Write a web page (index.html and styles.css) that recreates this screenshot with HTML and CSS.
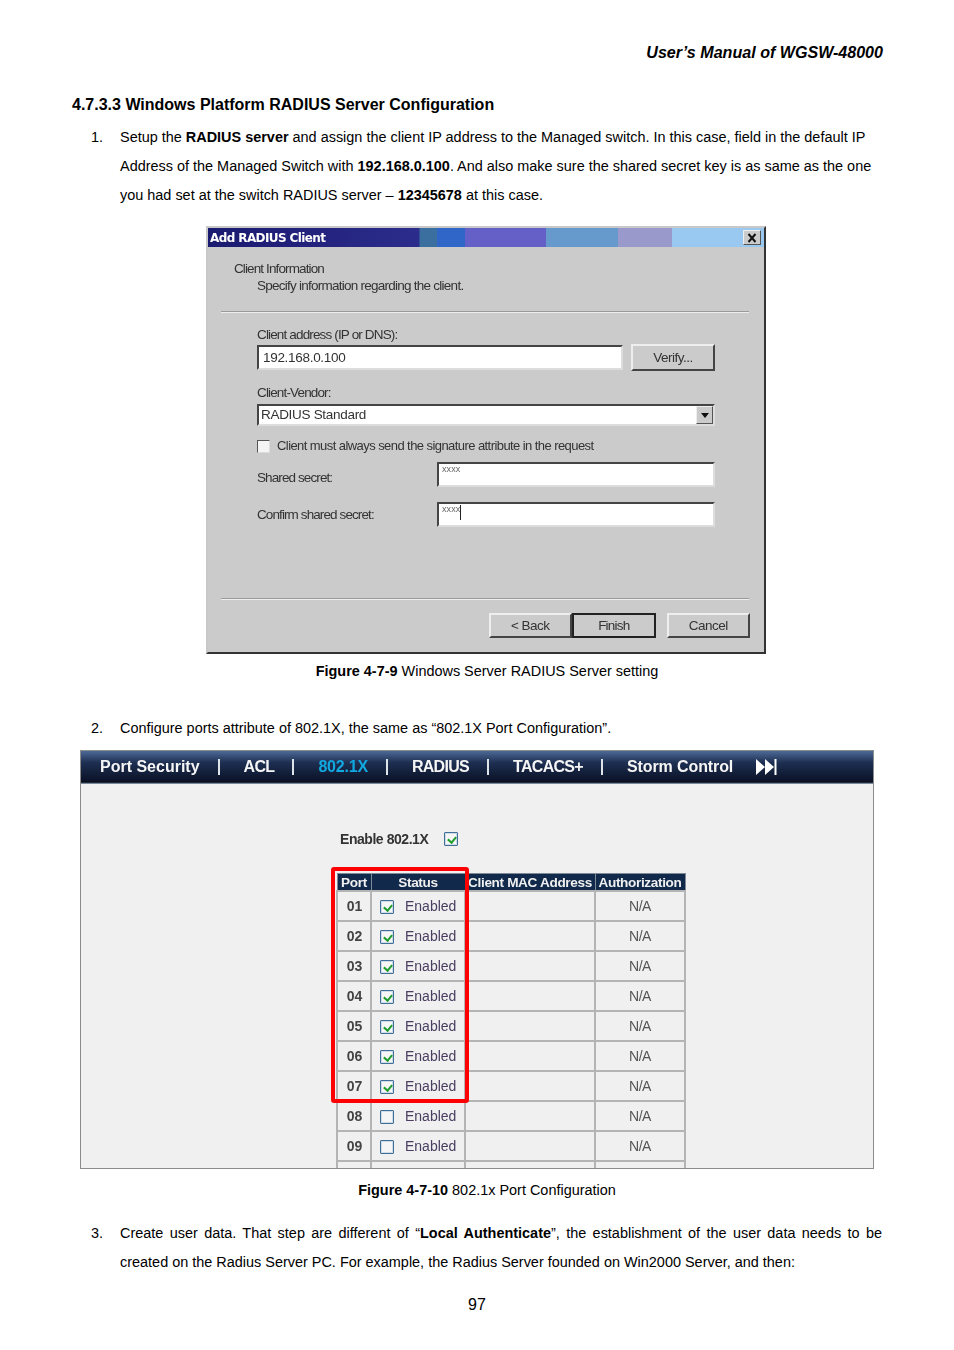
FILE: index.html
```html
<!DOCTYPE html>
<html lang="en">
<head>
<meta charset="utf-8">
<title>User's Manual of WGSW-48000</title>
<link rel="stylesheet" href="styles.css">
</head>
<body>
<main class="page">
  <p class="running-head">User’s Manual of WGSW-48000</p>
  <h2 class="section-title">4.7.3.3 Windows Platform RADIUS Server Configuration</h2>

  <div class="item">
    <span class="num">1.</span>
    <p>Setup the <b>RADIUS server</b> and assign the client IP address to the Managed switch. In this case, field in the default IP Address of the Managed Switch with <b>192.168.0.100</b>. And also make sure the shared secret key is as same as the one you had set at the switch RADIUS server – <b>12345678</b> at this case.</p>
  </div>

  <section class="dialog">
    <div class="titlebar">
      <span class="title">Add RADIUS Client</span>
      <span class="close"><svg width="14" height="12" viewBox="0 0 14 12"><path d="M3.5 2 10.5 10M10.5 2 3.5 10" stroke="#111" stroke-width="2" fill="none"/></svg></span>
    </div>
    <div class="dlg-head">
      <div class="dlg-h1">Client Information</div>
      <div class="dlg-h2">Specify information regarding the client.</div>
    </div>
    <hr class="etched">
    <div class="dlg-body">
      <label class="lbl">Client address (IP or DNS):</label>
      <div class="addr-row">
        <div class="field addr">192.168.0.100</div>
        <div class="btn verify">Verify...</div>
      </div>
      <label class="lbl vendor-lbl">Client-Vendor:</label>
      <div class="field combo">RADIUS Standard<span class="arrow"><svg width="8" height="5" viewBox="0 0 8 5"><path d="M0 0h8L4 5z" fill="#111"/></svg></span></div>
      <div class="check-row"><span class="win-check"></span><span>Client must always send the signature attribute in the request</span></div>
      <div class="secret-row first"><span class="secret-lbl">Shared secret:</span><div class="field secret">xxxx</div></div>
      <div class="secret-row"><span class="secret-lbl">Confirm shared secret:</span><div class="field secret caret">xxxx</div></div>
    </div>
    <hr class="etched lower">
    <div class="dlg-actions">
      <div class="btn">&lt; Back</div>
      <div class="btn default">Finish</div>
      <div class="btn cancel">Cancel</div>
    </div>
  </section>
  <p class="caption cap1"><b>Figure 4-7-9</b> Windows Server RADIUS Server setting</p>

  <div class="item item2">
    <span class="num">2.</span>
    <p>Configure ports attribute of 802.1X, the same as “802.1X Port Configuration”.</p>
  </div>

  <section class="webui">
    <nav class="tabs">
      <span>Port Security</span><i></i><span class="caps">ACL</span><i></i><span class="active">802.1X</span><i></i><span class="caps">RADIUS</span><i></i><span class="caps">TACACS+</span><i></i><span class="storm">Storm Control</span>
      <svg class="next" width="22" height="18" viewBox="0 0 22 18"><path d="M1 1 10 9 1 17zM10 1 19 9 10 17z" fill="#fff"/><path d="M20.5 1v16" stroke="#fff" stroke-width="2"/></svg>
    </nav>
    <div class="enable-row"><span>Enable 802.1X</span><span class="cb on"></span></div>
    <div class="table-wrap">
      <table class="ports">
        <thead><tr><th class="c1">Port</th><th class="c2">Status</th><th class="c3">Client MAC Address</th><th class="c4">Authorization</th></tr></thead>
        <tbody>
          <tr><td class="p">01</td><td class="s"><span class="cb on"></span>Enabled</td><td></td><td class="na">N/A</td></tr>
          <tr><td class="p">02</td><td class="s"><span class="cb on"></span>Enabled</td><td></td><td class="na">N/A</td></tr>
          <tr><td class="p">03</td><td class="s"><span class="cb on"></span>Enabled</td><td></td><td class="na">N/A</td></tr>
          <tr><td class="p">04</td><td class="s"><span class="cb on"></span>Enabled</td><td></td><td class="na">N/A</td></tr>
          <tr><td class="p">05</td><td class="s"><span class="cb on"></span>Enabled</td><td></td><td class="na">N/A</td></tr>
          <tr><td class="p">06</td><td class="s"><span class="cb on"></span>Enabled</td><td></td><td class="na">N/A</td></tr>
          <tr><td class="p">07</td><td class="s"><span class="cb on"></span>Enabled</td><td></td><td class="na">N/A</td></tr>
          <tr><td class="p">08</td><td class="s"><span class="cb"></span>Enabled</td><td></td><td class="na">N/A</td></tr>
          <tr><td class="p">09</td><td class="s"><span class="cb"></span>Enabled</td><td></td><td class="na">N/A</td></tr>
          <tr><td></td><td></td><td></td><td></td></tr>
        </tbody>
      </table>
      <div class="highlight"></div>
    </div>
  </section>
  <p class="caption cap2"><b>Figure 4-7-10</b> 802.1x Port Configuration</p>

  <div class="item item3">
    <span class="num">3.</span>
    <p class="justify">Create user data. That step are different of “<b>Local Authenticate</b>”, the establishment of the user data needs to be created on the Radius Server PC. For example, the Radius Server founded on Win2000 Server, and then:</p>
  </div>

  <footer class="page-no">97</footer>
</main>
</body>
</html>
```

FILE: styles.css
```css
* { box-sizing: border-box; }
html, body { margin: 0; padding: 0; background: #fff; }
body { font-family: "Liberation Sans", Arial, sans-serif; color: #000; width: 954px; height: 1350px; overflow: hidden; }
.page { padding: 43px 72px 0 72px; font-size: 14.44px; }
p { margin: 0; }
.running-head { text-align: right; font-weight: bold; font-style: italic; font-size: 16.1px; line-height: 18px; margin-right: -1px; }
.section-title { margin: 35px 0 0; font-size: 16px; line-height: 18px; font-weight: bold; }
.item { display: flex; margin-top: 9px; line-height: 29px; }
.num { width: 48px; padding-left: 19px; flex: none; }
.item p { flex: 1; }
.item p:not(.justify) { margin-right: -3px; }
.justify { text-align: justify; }

/* Windows dialog */
.dialog { width: 560px; height: 428px; margin: 16px 0 0 134px; background: #cbcbcb; border: 2px solid #333; border-top-color: #c8c8c8; border-left-color: #c8c8c8; font-size: 12px; color: #333; filter: blur(.4px); }
.titlebar { height: 19px; display: flex; align-items: center; justify-content: space-between; padding: 0 3px 0 2px; background: linear-gradient(90deg, #1a1a70 0, #2c2c8c 211px, #3b6f9f 212px, #3b6f9f 229px, #2f66c8 229px, #2f66c8 257px, #6460c8 257px, #6460c8 338px, #6699cc 338px, #6699cc 410px, #9999cc 410px, #9999cc 464px, #99c8f0 464px); }
.title { color: #fff; font: bold 12px "DejaVu Sans", sans-serif; letter-spacing: -.6px; }
.close { width: 18px; height: 15px; display: flex; align-items: center; justify-content: center; background: #cbcbcb; border: 1px solid #555; border-top-color: #eee; border-left-color: #eee; }
.dlg-head { padding: 13px 0 0 26px; height: 64px; line-height: 17px; }
.dlg-h1 { font-size: 13.5px; letter-spacing: -.88px; }
.dlg-h2 { padding-left: 23px; font-size: 13.5px; letter-spacing: -.75px; }
.etched { height: 2px; margin: 0 15px 0 13px; border: 0; border-top: 1px solid #9b9b9b; border-bottom: 1px solid #eee; }
.etched.lower { margin-top: 71px; }
.dlg-body { padding: 13px 49px 0 49px; }
.lbl { display: block; font-size: 13.5px; line-height: 17px; letter-spacing: -.85px; }
.addr-row { display: flex; justify-content: space-between; margin-top: 2px; }
.field { background: #fff; border: 2px solid #444; border-right-color: #ddd; border-bottom-color: #ddd; color: #333; }
.addr { width: 366px; height: 25px; line-height: 21px; padding-left: 4px; font-size: 13.5px; letter-spacing: -.3px; }
.btn { width: 84px; height: 27px; display: flex; align-items: center; justify-content: center; background: #cbcbcb; border: 2px solid #444; border-top-color: #eee; border-left-color: #eee; font-size: 13.5px; letter-spacing: -.5px; }
.verify { margin-top: -1px; }
.vendor-lbl { margin-top: 13px; }
.combo { position: relative; height: 22px; margin-top: 3px; line-height: 18px; padding-left: 2px; font-size: 13.5px; letter-spacing: -.3px; }
.arrow { position: absolute; right: 0; top: 0; width: 17px; height: 18px; display: flex; align-items: center; justify-content: center; background: #cbcbcb; border: 1px solid #555; border-top-color: #eee; border-left-color: #eee; }
.check-row { display: flex; align-items: center; gap: 7px; margin-top: 12px; font-size: 13px; letter-spacing: -.57px; line-height: 16px; }
.win-check { width: 13px; height: 13px; background: #f4f4f4; border: 1px solid #555; border-right-color: #ddd; border-bottom-color: #ddd; }
.secret-row { display: flex; align-items: center; margin-top: 15px; font-size: 13.5px; letter-spacing: -.9px; }
.secret-row.first { margin-top: 8px; }
.secret-lbl { width: 180px; margin-top: 5px; }
.secret-row + .secret-row .secret-lbl { margin-top: 0; }
.secret { width: 278px; height: 25px; font-size: 9px; line-height: 9px; padding: 1px 0 0 3px; letter-spacing: .1px; color: #666; }
.caret::after { content: ""; display: inline-block; width: 1px; height: 15px; background: #222; vertical-align: top; }
.dlg-actions { display: flex; justify-content: flex-end; padding: 13px 14px 0 0; }
.dlg-actions .btn { height: 25px; width: 83.5px; }
.btn.default { border-color: #222; letter-spacing: -.8px; }
.btn.cancel { margin-left: 11px; }

.caption { text-align: center; margin-left: 20px; line-height: 17px; }
.cap1 { margin-top: 9px; }
.item2 { margin-top: 34px; }

/* Web UI */
.webui { position: relative; width: 794px; height: 419px; margin: 7px 0 0 8px; background: #f0f0f0; border: 1px solid #8c8c8c; overflow: hidden; filter: blur(.35px); }
.tabs { height: 33px; display: flex; align-items: center; padding: 0 0 1px 19px; background: linear-gradient(#4d6a96 0, #1e2f52 35%, #0a1226 92%, #000 94%, #9db6d6 100%); color: #f5f5f5; font-size: 16px; font-weight: bold; white-space: nowrap; }
.tabs i { width: 2px; height: 16px; background: #dfe3ea; margin: 0 24px 0 18px; }
.tabs .caps { letter-spacing: -.7px; }
.tabs .storm { letter-spacing: -.1px; }
.tabs .active { color: #12a8e0; letter-spacing: -.2px; }
.next { margin-left: 22px; }
.enable-row { display: flex; align-items: center; gap: 16px; margin: 47px 0 0 259px; font-size: 14px; font-weight: bold; color: #333; letter-spacing: -.45px; height: 16px; }
.cb { display: inline-block; position: relative; width: 14px; height: 14px; background: #f6f6f6; border: 1px solid #3f6f98; border-radius: 1px; flex: none; box-shadow: inset 0 0 0 1px #cfdbe6; }
.cb.on::after { content: ""; position: absolute; left: 4px; top: 2px; width: 4px; height: 6px; border: solid #1f9d2d; border-width: 0 2px 2px 0; transform: rotate(40deg); }
.table-wrap { position: relative; margin: 26px 0 0 255px; width: 348px; }
.ports { border-collapse: collapse; table-layout: fixed; width: 348px; color: #444; font-size: 14px; }
.ports th { height: 15px; line-height: 14px; padding: 2px 0 0; background: #11294a; color: #f0f0f0; border: 1px solid #7f8a97; font-size: 13.6px; letter-spacing: -.35px; white-space: nowrap; overflow: hidden; }
.ports td { height: 30px; padding: 0; text-align: center; border: 2px solid #b4b4b4; }
.c1 { width: 34px; }
.c2 { width: 94px; }
.c3 { width: 130px; }
.c4 { width: 90px; }
.p { font-weight: bold; padding-left: 1px !important; }
.s { white-space: nowrap; text-align: left !important; padding-left: 8px !important; color: #4a3d60; }
.s .cb { vertical-align: -3px; margin-right: 11px; }
.na { color: #555; letter-spacing: -.5px; }
.highlight { position: absolute; left: -5px; top: -6px; width: 138px; height: 236px; border: 4px solid #f00; border-radius: 3px; pointer-events: none; }

.cap2 { margin-top: 13px; }
.item3 { margin-top: 20px; }
.page-no { text-align: center; font-size: 16px; line-height: 18px; margin-top: 19px; }
```
